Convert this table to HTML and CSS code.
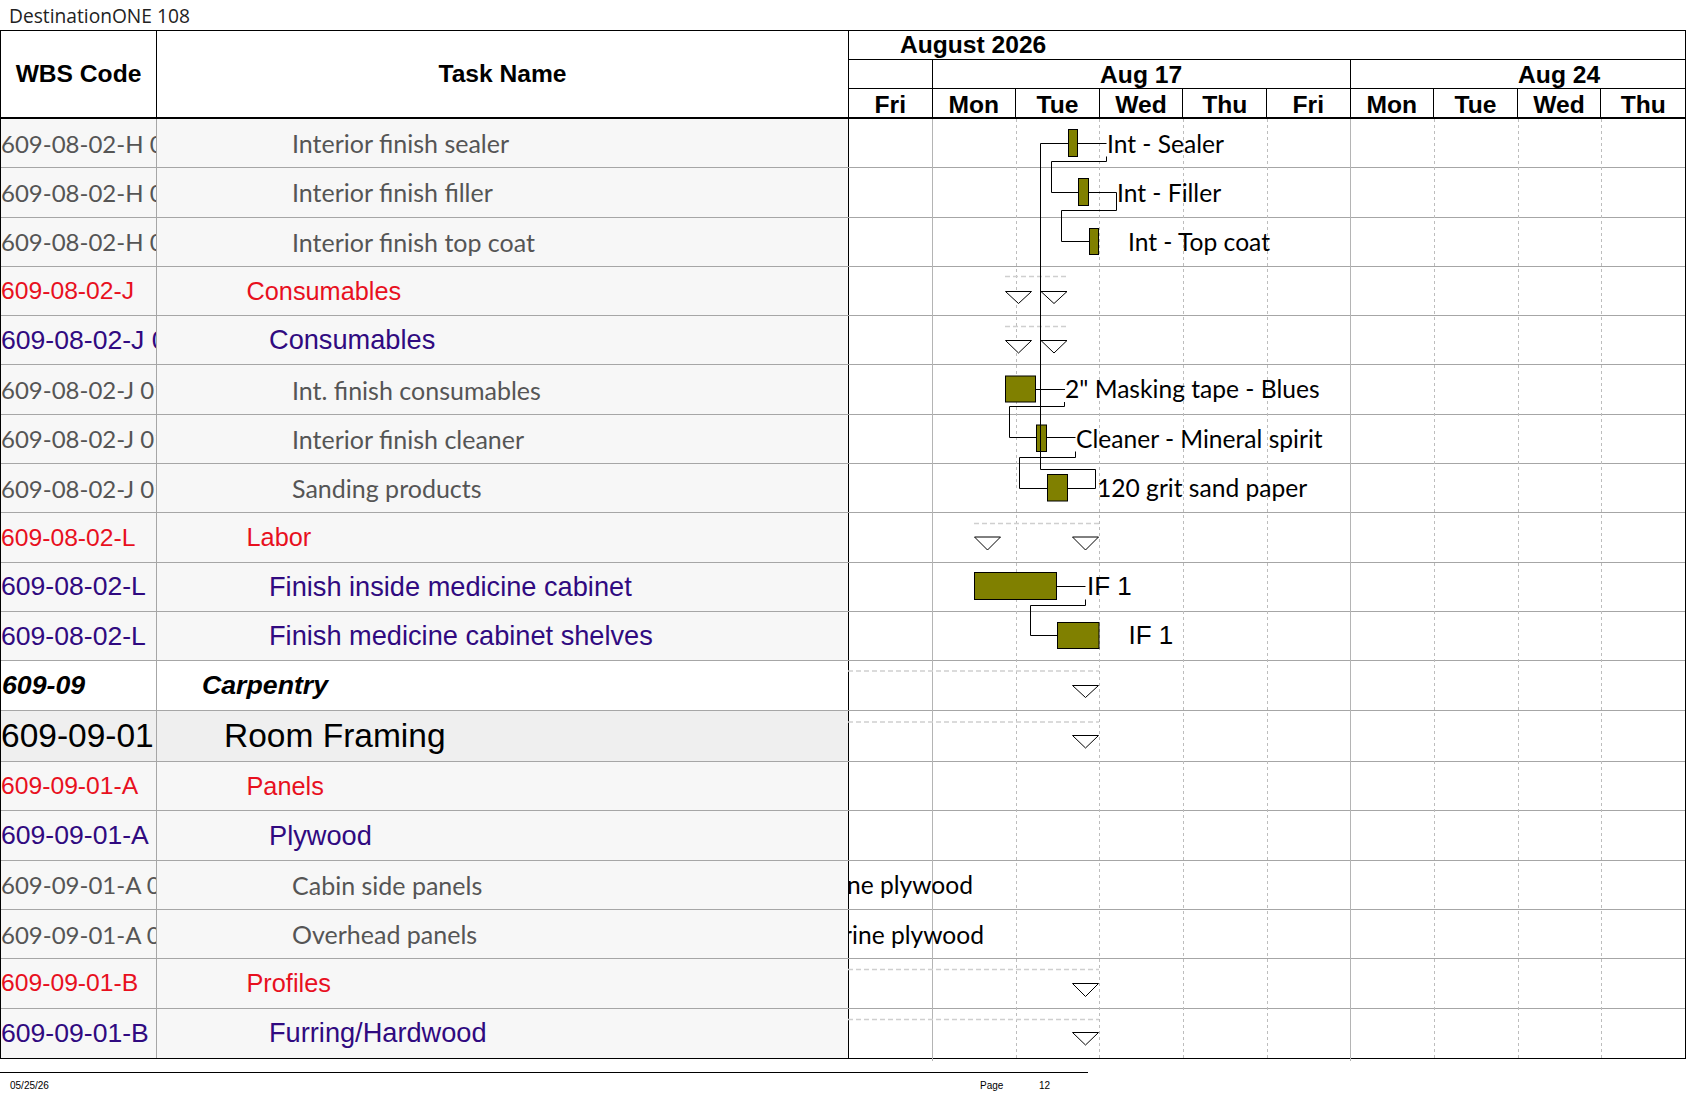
FILE: index.html
```html
<!DOCTYPE html>
<html>
<head>
<meta charset="utf-8">
<title>DestinationONE 108</title>
<link rel="stylesheet" href="styles.css">
</head>
<body>
<div class="title">DestinationONE 108</div>
<div class="table">
  <div class="head">
    <div class="hcell">WBS Code</div>
    <div class="hcell">Task Name</div>
    <div class="hgantt">
      <div class="hmonth">August 2026</div>
      <div class="hweek">
        <div class="wk0"></div>
        <div class="wk">Aug 17</div>
        <div class="wk">Aug 24</div>
      </div>
      <div class="hdays">
        <div class="day">Fri</div><div class="day">Mon</div><div class="day">Tue</div><div class="day">Wed</div><div class="day">Thu</div>
        <div class="day">Fri</div><div class="day">Mon</div><div class="day">Tue</div><div class="day">Wed</div><div class="day last">Thu</div>
      </div>
    </div>
  </div>
  <div class="rows">
    <div class="row"><div class="c-wbs gray">609-08-02-H 01</div><div class="c-task gray i5">Interior finish sealer</div><div class="c-gantt"></div></div>
    <div class="row"><div class="c-wbs gray">609-08-02-H 02</div><div class="c-task gray i5">Interior finish filler</div><div class="c-gantt"></div></div>
    <div class="row"><div class="c-wbs gray">609-08-02-H 03</div><div class="c-task gray i5">Interior finish top coat</div><div class="c-gantt"></div></div>
    <div class="row"><div class="c-wbs red">609-08-02-J</div><div class="c-task red i3">Consumables</div><div class="c-gantt"></div></div>
    <div class="row"><div class="c-wbs purple">609-08-02-J 01</div><div class="c-task purple i4">Consumables</div><div class="c-gantt"></div></div>
    <div class="row"><div class="c-wbs gray">609-08-02-J 01</div><div class="c-task gray i5">Int. finish consumables</div><div class="c-gantt"></div></div>
    <div class="row"><div class="c-wbs gray">609-08-02-J 01</div><div class="c-task gray i5">Interior finish cleaner</div><div class="c-gantt"></div></div>
    <div class="row"><div class="c-wbs gray">609-08-02-J 01</div><div class="c-task gray i5">Sanding products</div><div class="c-gantt"></div></div>
    <div class="row"><div class="c-wbs red">609-08-02-L</div><div class="c-task red i3">Labor</div><div class="c-gantt"></div></div>
    <div class="row"><div class="c-wbs purple">609-08-02-L</div><div class="c-task purple i4">Finish inside medicine cabinet</div><div class="c-gantt"></div></div>
    <div class="row"><div class="c-wbs purple">609-08-02-L</div><div class="c-task purple i4">Finish medicine cabinet shelves</div><div class="c-gantt"></div></div>
    <div class="row white"><div class="c-wbs l1">609-09</div><div class="c-task l1 i1">Carpentry</div><div class="c-gantt"></div></div>
    <div class="row tall"><div class="c-wbs l2">609-09-01</div><div class="c-task l2 i2">Room Framing</div><div class="c-gantt"></div></div>
    <div class="row"><div class="c-wbs red">609-09-01-A</div><div class="c-task red i3">Panels</div><div class="c-gantt"></div></div>
    <div class="row"><div class="c-wbs purple">609-09-01-A</div><div class="c-task purple i4">Plywood</div><div class="c-gantt"></div></div>
    <div class="row"><div class="c-wbs gray">609-09-01-A 01</div><div class="c-task gray i5">Cabin side panels</div><div class="c-gantt"></div></div>
    <div class="row"><div class="c-wbs gray">609-09-01-A 02</div><div class="c-task gray i5">Overhead panels</div><div class="c-gantt"></div></div>
    <div class="row"><div class="c-wbs red">609-09-01-B</div><div class="c-task red i3">Profiles</div><div class="c-gantt"></div></div>
    <div class="row"><div class="c-wbs purple">609-09-01-B</div><div class="c-task purple i4">Furring/Hardwood</div><div class="c-gantt"></div></div>

    <svg class="chart" width="837" height="942" viewBox="848 119 837 942" xmlns="http://www.w3.org/2000/svg">
      <g class="grid-solid">
        <line x1="932.5" y1="119" x2="932.5" y2="1061"/>
        <line x1="1350.5" y1="119" x2="1350.5" y2="1061"/>
      </g>
      <g class="grid-dash">
        <line x1="1016.5" y1="119" x2="1016.5" y2="1061"/>
        <line x1="1099.5" y1="119" x2="1099.5" y2="1061"/>
        <line x1="1183.5" y1="119" x2="1183.5" y2="1061"/>
        <line x1="1267.5" y1="119" x2="1267.5" y2="1061"/>
        <line x1="1434.5" y1="119" x2="1434.5" y2="1061"/>
        <line x1="1518.5" y1="119" x2="1518.5" y2="1061"/>
        <line x1="1601.5" y1="119" x2="1601.5" y2="1061"/>
      </g>
      <g class="sum">
        <line x1="1005" y1="276.5" x2="1069" y2="276.5"/>
        <line x1="1005" y1="326.5" x2="1069" y2="326.5"/>
        <line x1="974" y1="523.5" x2="1099" y2="523.5"/>
        <line x1="848" y1="671" x2="1099" y2="671"/>
        <line x1="848" y1="722" x2="1099" y2="722"/>
        <line x1="848" y1="969.5" x2="1099" y2="969.5"/>
        <line x1="848" y1="1019.5" x2="1099" y2="1019.5"/>
      </g>
      <g class="tri">
        <polygon points="1005.5,291.5 1031.5,291.5 1018.5,303.5"/>
        <polygon points="1041,291.5 1067,291.5 1054,303.5"/>
        <polygon points="1005.5,340.5 1031.5,340.5 1018.5,353"/>
        <polygon points="1041,340.5 1067,340.5 1054,353"/>
        <polygon points="974.5,537 1000.5,537 987.5,550"/>
        <polygon points="1072.5,537 1098.5,537 1085.5,550"/>
        <polygon points="1072.5,685.5 1098.5,685.5 1085.5,697.5"/>
        <polygon points="1072.5,735.5 1098.5,735.5 1085.5,748"/>
        <polygon points="1072.5,983.5 1098.5,983.5 1085.5,996.5"/>
        <polygon points="1072.5,1032.5 1098.5,1032.5 1085.5,1045"/>
      </g>
      <g class="bar">
        <rect x="1068.5" y="129.5" width="9" height="27"/>
        <rect x="1078.5" y="178.5" width="10" height="27"/>
        <rect x="1089.5" y="228.5" width="9" height="26"/>
        <rect x="1005.5" y="376" width="30" height="26"/>
        <rect x="1036.5" y="425" width="10" height="26.5"/>
        <rect x="1047.5" y="474.5" width="20" height="26.5"/>
        <rect x="974.5" y="572.5" width="82" height="27"/>
        <rect x="1057.5" y="622.5" width="41.5" height="26"/>
      </g>
      <g class="link">
        <polyline points="1068.5,143.5 1040.5,143.5 1040.5,469.5 1095.5,469.5 1095.5,488.5 1067.5,488.5"/>
        <polyline points="1077.5,143.5 1106.5,143.5"/>
        <polyline points="1106.5,156.5 1106.5,161.5 1051.5,161.5 1051.5,192.5 1078.5,192.5"/>
        <polyline points="1088.5,192.5 1116.5,192.5 1116.5,210.5 1061.5,210.5 1061.5,241.5 1089.5,241.5"/>
        <polyline points="1035.5,389.5 1065,389.5"/>
        <polyline points="1064.5,402 1064.5,406.5 1009.5,406.5 1009.5,437.5 1036.5,437.5"/>
        <polyline points="1046.5,437.5 1075.5,437.5"/>
        <polyline points="1075.5,451.5 1075.5,457.5 1019.5,457.5 1019.5,488.5 1047.5,488.5"/>
        <polyline points="1056.5,586.5 1085.5,586.5"/>
        <polyline points="1085.5,599.5 1085.5,605.5 1030.5,605.5 1030.5,635.5 1057.5,635.5"/>
      </g>
      <g class="lbl">
        <text x="1107" y="152.5">Int - Sealer</text>
        <text x="1117" y="201.5">Int - Filler</text>
        <text x="1128" y="251">Int - Top coat</text>
        <text x="1065" y="397.5">2" Masking tape - Blues</text>
        <text x="1076" y="447.5">Cleaner - Mineral spirit</text>
        <text x="1097" y="496.5">120 grit sand paper</text>
        <text x="973" y="894" text-anchor="end">3/4" Marine plywood</text>
        <text x="984" y="943.5" text-anchor="end">1/2" Marine plywood</text>
      </g>
      <g class="lbl-arial">
        <text x="1087" y="594.5">IF 1</text>
        <text x="1128.5" y="643.5">IF 1</text>
      </g>
    </svg>
  </div>
</div>
<div class="footer">
  <span class="f-date">05/25/26</span>
  <span class="f-page">Page</span>
  <span class="f-num">12</span>
</div>
</body>
</html>
```

FILE: styles.css
```css
body {
  margin: 0;
  background: #fff;
  font-family: "Liberation Sans", Arial, sans-serif;
  color: #000;
  width: 1687px;
}

.title {
  height: 30px;
  box-sizing: border-box;
  padding: 4px 0 0 9px;
  font-family: "Open Sans", sans-serif;
  font-size: 19.2px;
  line-height: 23px;
  color: #222;
}

.table {
  width: 1686px;
  box-sizing: border-box;
  border: 1px solid #000;
}

.head {
  display: grid;
  grid-template-columns: 156px 692px 836px;
  height: 88px;
  box-sizing: border-box;
  border-bottom: 2px solid #000;
}

.hcell {
  display: flex;
  align-items: center;
  justify-content: center;
  font-weight: bold;
  font-size: 24.6px;
  border-right: 1px solid #000;
}

.hgantt {
  display: flex;
  flex-direction: column;
  overflow: hidden;
  font-weight: bold;
  font-size: 24.6px;
}

.hmonth {
  height: 29px;
  box-sizing: border-box;
  border-bottom: 1px solid #000;
  padding-left: 51px;
  line-height: 28px;
  white-space: nowrap;
}

.hweek {
  height: 29px;
  box-sizing: border-box;
  border-bottom: 1px solid #000;
  display: flex;
  line-height: 29px;
  white-space: nowrap;
}

.wk0 {
  flex: 0 0 83.6px;
  box-sizing: border-box;
  border-right: 1px solid #000;
}

.wk {
  flex: 0 0 418px;
  box-sizing: border-box;
  border-right: 1px solid #000;
  text-align: center;
}

.hdays {
  height: 28px;
  display: grid;
  grid-template-columns: repeat(10, 1fr);
  line-height: 31px;
}

.day {
  text-align: center;
  border-right: 1px solid #000;
  overflow: hidden;
}

.day.last {
  border-right: none;
}

.rows {
  position: relative;
}

.row {
  display: grid;
  grid-template-columns: 156px 692px 836px;
  height: 49.3px;
  box-sizing: border-box;
  border-bottom: 1px solid #a6a6a6;
}

.row.tall {
  height: 51.6px;
}

.row:nth-last-child(2) {
  border-bottom: none;
}

.c-wbs {
  background: #f7f7f7;
  border-right: 1px solid #a6a6a6;
  display: flex;
  align-items: center;
  white-space: nowrap;
  overflow: hidden;
}

.c-task {
  background: #f7f7f7;
  border-right: 1px solid #000;
  display: flex;
  align-items: center;
  white-space: nowrap;
  overflow: hidden;
}

.c-gantt {
  background: #fff;
}

.row.white .c-wbs,
.row.white .c-task {
  background: #fff;
}

.row.tall .c-wbs,
.row.tall .c-task {
  background: #efefef;
}

.gray {
  font-family: Lato, "Open Sans", sans-serif;
  font-size: 25px;
  color: #555;
}

.red {
  font-size: 25.3px;
  color: #e8101e;
}

.purple {
  font-size: 27.2px;
  color: #300a80;
}

.c-wbs.gray { font-size: 24px; }
.c-wbs.red { font-size: 24.7px; }
.c-wbs.purple { font-size: 26.6px; }

.l1 {
  font-size: 26.7px;
  font-weight: bold;
  font-style: italic;
}

.l2 {
  font-size: 33.5px;
}

.c-wbs.l1 {
  padding-left: 1px;
}

.i1 { padding-left: 45px; }
.i2 { padding-left: 67px; }
.i3 { padding-left: 89.5px; }
.i4 { padding-left: 112px; }
.i5 { padding-left: 135px; }

.chart {
  position: absolute;
  left: 847px;
  top: 0;
  overflow: hidden;
}

.grid-solid line {
  stroke: #b4b4b4;
  stroke-width: 1;
}

.grid-dash line {
  stroke: #bdbdbd;
  stroke-width: 1;
  stroke-dasharray: 3 3;
}

.sum line {
  stroke: #cfcfcf;
  stroke-width: 1.5;
  stroke-dasharray: 5 3;
}

.tri polygon {
  fill: #fff;
  stroke: #000;
  stroke-width: 1;
}

.bar rect {
  fill: #808000;
  stroke: #000;
  stroke-width: 1;
}

.link polyline {
  fill: none;
  stroke: #000;
  stroke-width: 1;
}

.lbl text {
  font-family: Lato, "Open Sans", sans-serif;
  font-size: 24.6px;
  fill: #000;
}

.lbl-arial text {
  font-family: "Liberation Sans", Arial, sans-serif;
  font-size: 26px;
  fill: #000;
}

.footer {
  margin-top: 13px;
  width: 1088px;
  height: 26px;
  box-sizing: border-box;
  border-top: 1px solid #000;
  display: flex;
  padding: 7px 0 0 10px;
  font-size: 10px;
  line-height: 12px;
  color: #000;
}

.f-date { width: 970px; }
.f-page { width: 59px; }
```
